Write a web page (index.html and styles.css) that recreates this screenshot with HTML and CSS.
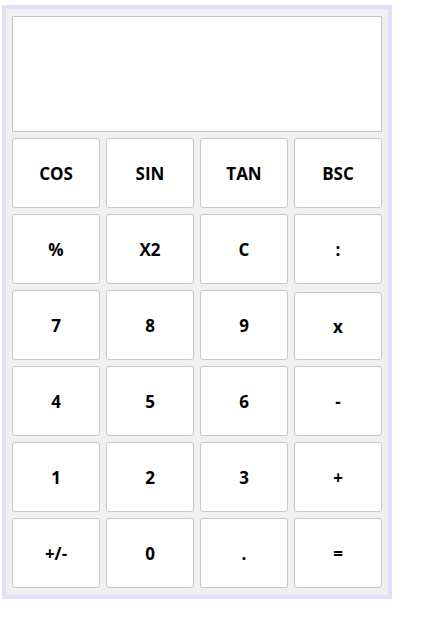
FILE: index.html
```html
<!DOCTYPE html>
<html>
<head>
<meta charset="utf-8">
<link rel="stylesheet" href="styles.css">
</head>
<body>
<div class="calc">
  <div class="display"></div>
  <div class="keys">
    <button class="key">COS</button>
    <button class="key">SIN</button>
    <button class="key">TAN</button>
    <button class="key">BSC</button>
    <button class="key">%</button>
    <button class="key">X2</button>
    <button class="key">C</button>
    <button class="key">:</button>
    <button class="key">7</button>
    <button class="key">8</button>
    <button class="key">9</button>
    <button class="key key-x">x</button>
    <button class="key">4</button>
    <button class="key">5</button>
    <button class="key">6</button>
    <button class="key">-</button>
    <button class="key">1</button>
    <button class="key">2</button>
    <button class="key">3</button>
    <button class="key">+</button>
    <button class="key">+/-</button>
    <button class="key">0</button>
    <button class="key">.</button>
    <button class="key">=</button>
  </div>
</div>
</body>
</html>
```

FILE: styles.css
```css
html, body {
  margin: 0;
  padding: 0;
  background: #ffffff;
}
.calc {
  margin: 5px 0 0 2px;
  border: 4px solid #e0e0fa;
  background: #f0f0f0;
  padding: 7px 6px 7px 6px;
  box-sizing: content-box;
  width: 370px;
  display: flex;
  flex-direction: column;
  gap: 6px;
}
.display {
  height: 114px;
  background: #ffffff;
  border: 1px solid #c4c4c4;
}
.keys {
  display: grid;
  grid-template-columns: repeat(4, 88px);
  grid-auto-rows: 70px;
  column-gap: 6px;
  row-gap: 6px;
}
.key {
  margin: 0;
  padding: 0;
  background: #ffffff;
  border: 1px solid #c8c8c8;
  border-radius: 3px;
  font-family: "Open Sans", "Noto Sans", sans-serif;
  font-weight: 700;
  font-size: 17px;
  color: #000000;
  display: flex;
  align-items: center;
  justify-content: center;
}
.key-x {
  margin-top: 2px;
}
```
